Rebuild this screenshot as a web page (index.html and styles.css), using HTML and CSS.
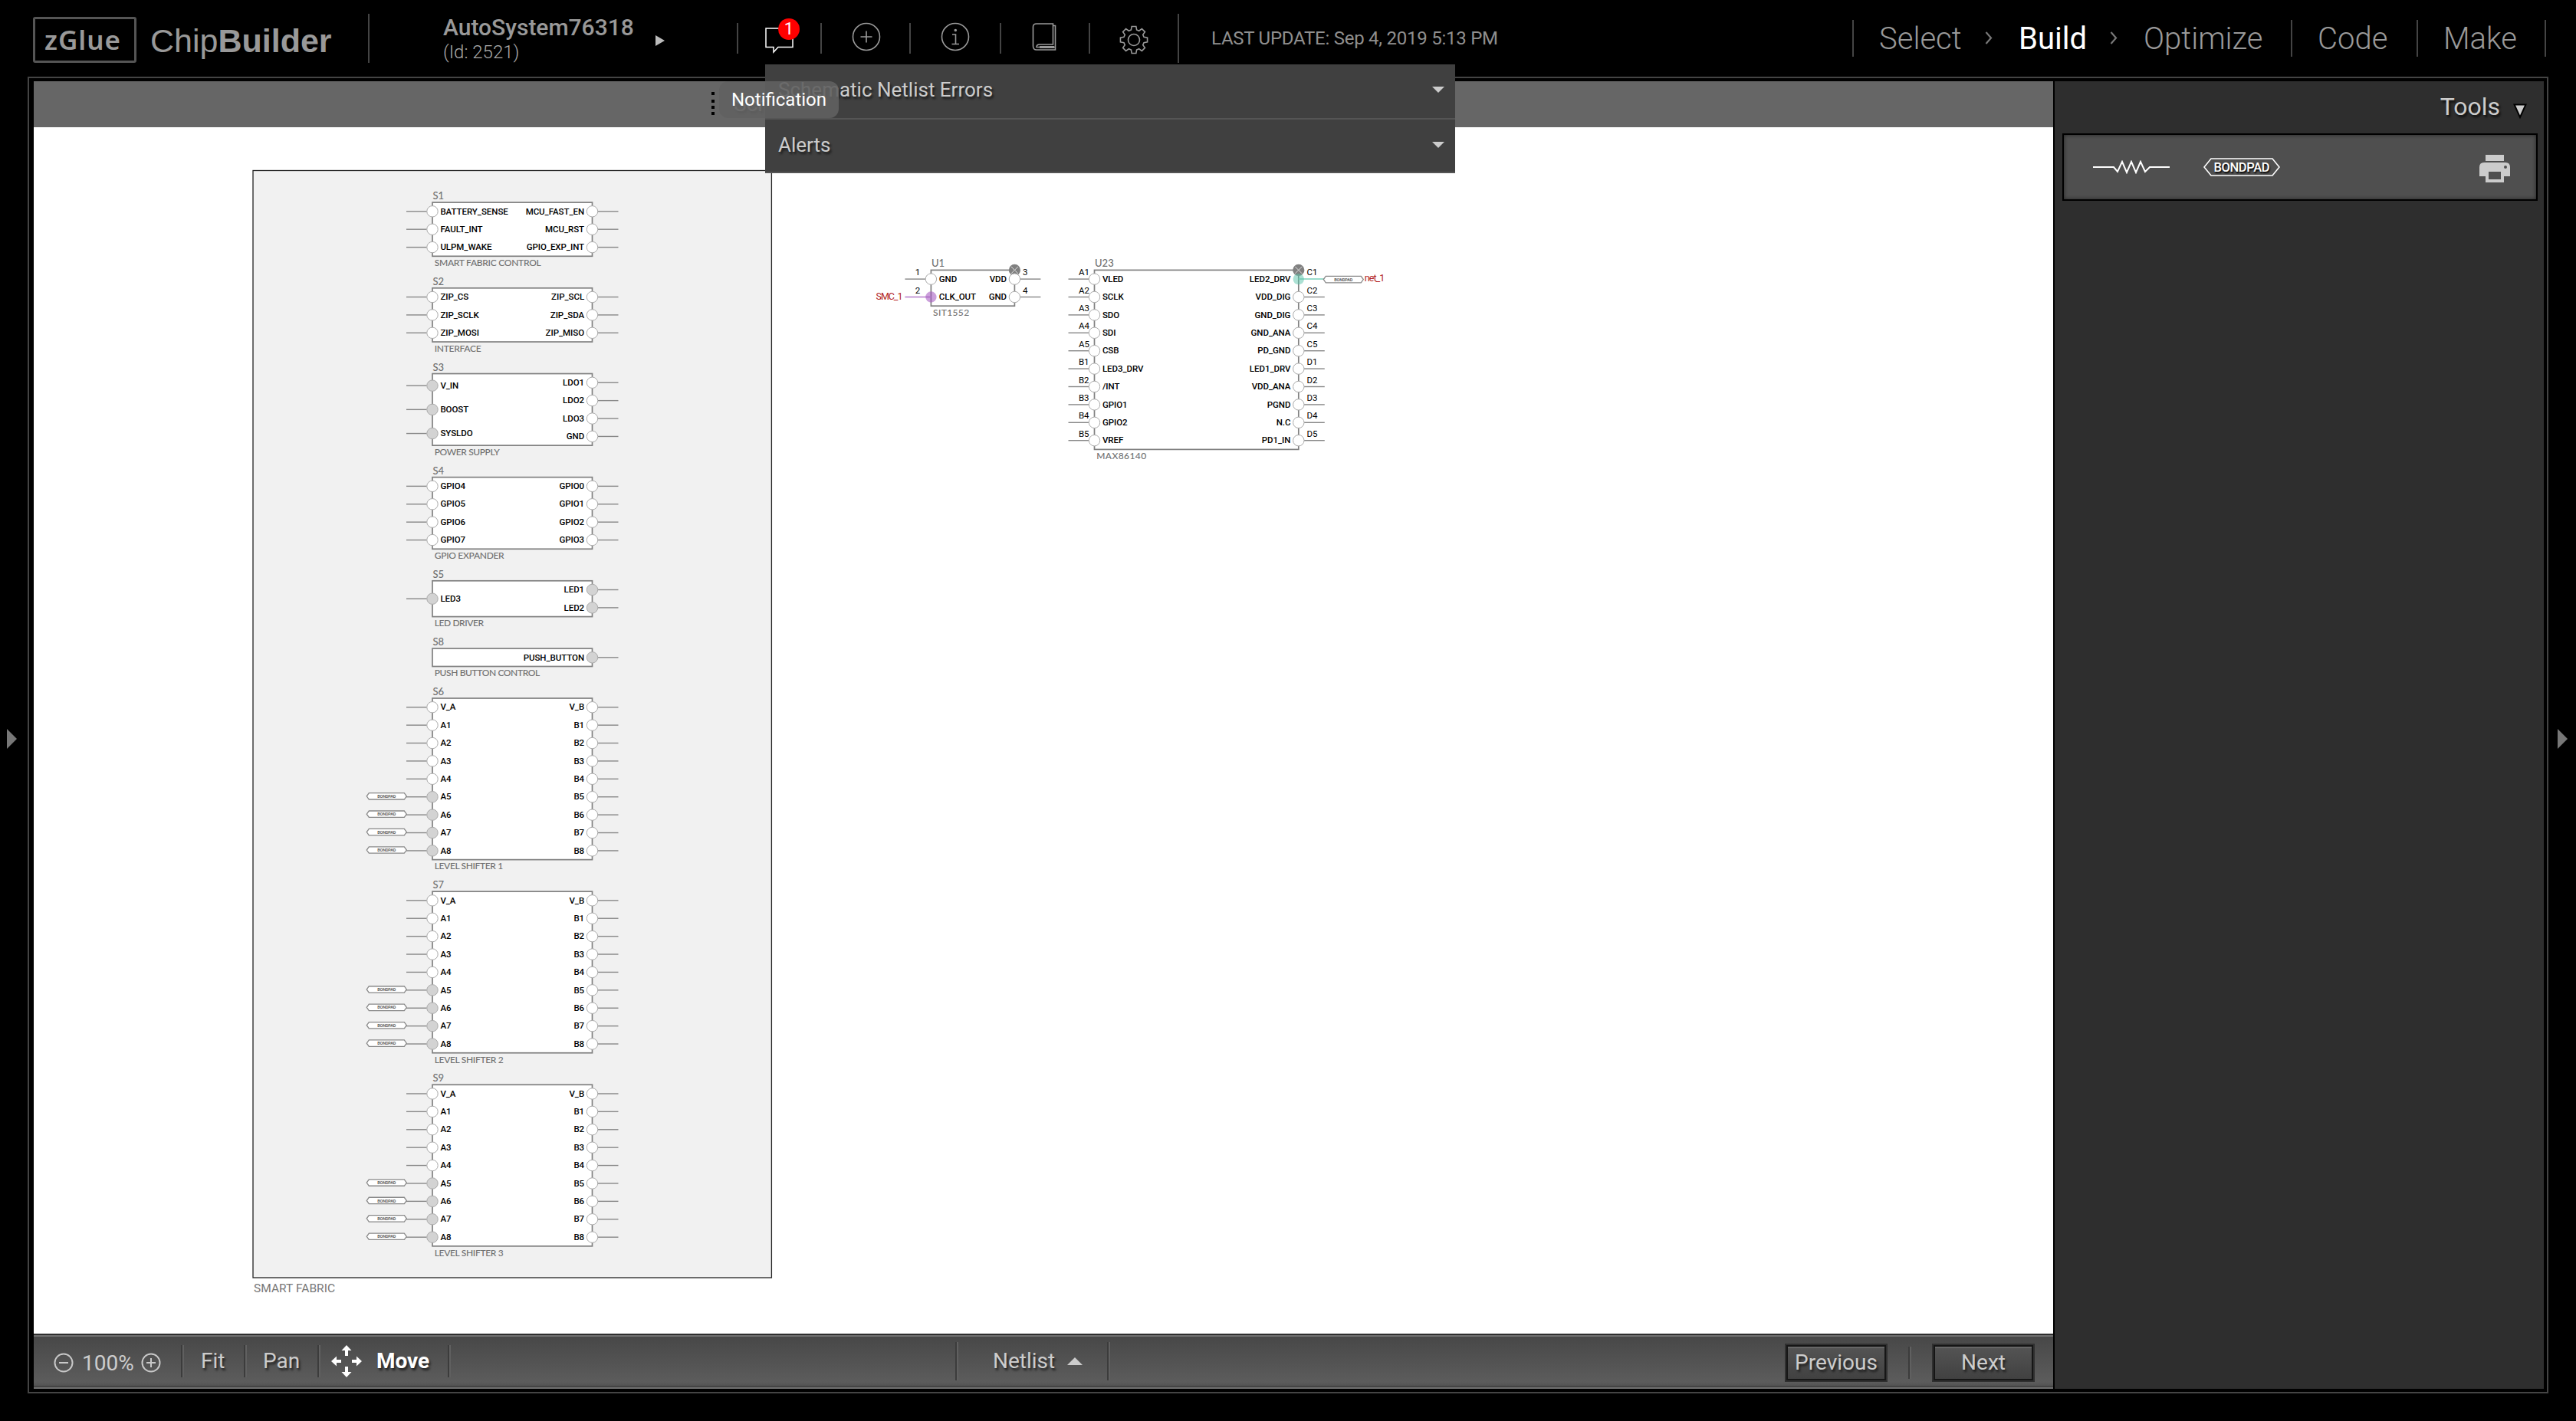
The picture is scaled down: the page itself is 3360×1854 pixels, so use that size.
FILE: index.html
```html
<!DOCTYPE html>
<html lang="en">
<head>
<meta charset="utf-8">
<title>zGlue ChipBuilder</title>
<link rel="stylesheet" href="styles.css">
</head>
<body>
<header class="header">
  <div class="brand">
    <div class="brand-box">zGlue</div>
    <div class="brand-name">Chip<b>Builder</b></div>
  </div>
  <div class="project">
    <div>
      <div class="project-name">AutoSystem76318</div>
      <div class="project-id">(Id: 2521)</div>
    </div>
    <svg class="project-arrow" width="12" height="14" viewBox="0 0 12 14"><path d="M0 0L12 7L0 14Z" fill="#bbb"/></svg>
  </div>
  <nav class="icons">
    <div class="icon-cell notif">
      <svg width="37" height="34" viewBox="0 0 37 34"><path d="M1 1H36V25.500H17L11 32V25.500H1Z" fill="none" stroke="#fff" stroke-width="1.500"/></svg>
      <span class="badge">1</span>
    </div>
    <div class="icon-cell add">
      <svg width="38" height="38" viewBox="0 0 38 38" fill="none" stroke="#999" stroke-width="1.600"><circle cx="19" cy="19" r="17.500"/><path d="M11.500 19H26.500M19 11.500V26.500"/></svg>
    </div>
    <div class="icon-cell info">
      <svg width="38" height="38" viewBox="0 0 38 38" fill="none" stroke="#999" stroke-width="1.600"><circle cx="19" cy="19" r="17.500"/><path d="M15 16H19.500V28M14.500 28.500H24"/><circle cx="19.300" cy="10.500" r="1" fill="#999"/></svg>
    </div>
    <div class="icon-cell book">
      <svg width="32" height="38" viewBox="0 0 32 38" fill="none" stroke="#999" stroke-width="1.600"><path d="M27 4.500H30.500V36H6Q1.500 36 1.500 31V6Q1.500 2 6 2H27.500V29H10Q6 29 6 32.500H30"/><path d="M10 32.500H29" stroke-width="3"/></svg>
    </div>
    <div class="icon-cell gear">
      <svg id="gear" width="38" height="38" viewBox="-19 -19 38 38" fill="none" stroke="#999" stroke-width="1.600"><circle r="7.500"/></svg>
    </div>
  </nav>
  <div class="update">LAST UPDATE: Sep 4, 2019 5:13 PM</div>
  <nav class="steps">
    <span class="step s-select">Select</span>
    <svg class="chev" width="10" height="17" viewBox="0 0 10 17"><path d="M1.500 1L8 8.500L1.500 16" fill="none" stroke="#777" stroke-width="2.200"/></svg>
    <span class="step s-build">Build</span>
    <svg class="chev" width="10" height="17" viewBox="0 0 10 17"><path d="M1.500 1L8 8.500L1.500 16" fill="none" stroke="#777" stroke-width="2.200"/></svg>
    <span class="step s-opt">Optimize</span>
    <span class="step s-code">Code</span>
    <span class="step s-make">Make</span>
  </nav>
</header>

<main class="frame">
  <section class="work">
    <div class="titlebar">
      <div class="grip"><i></i><i></i><i></i><i></i></div>
      <span class="title">Schematic</span>
    </div>
    <svg class="canvas" id="canvas" width="2634" height="1574" viewBox="44 166 2634 1574"></svg>
    <footer class="toolbar">
      <div class="zoom">
        <svg width="26" height="26" viewBox="0 0 26 26" fill="none" stroke="#c8c8c8" stroke-width="2"><circle cx="13" cy="13" r="11.500"/><path d="M7 13H19"/></svg>
        <span class="zoom-value">100%</span>
        <svg width="26" height="26" viewBox="0 0 26 26" fill="none" stroke="#c8c8c8" stroke-width="2"><circle cx="13" cy="13" r="11.500"/><path d="M7 13H19M13 7V19"/></svg>
      </div>
      <div class="cell fit">Fit</div>
      <div class="cell pan">Pan</div>
      <div class="cell move">
        <svg width="40" height="42" viewBox="0 0 40 42" fill="#fff"><path d="M20 0L26.500 7H22V14H18V7H13.500ZM20 42L26.500 35H22V28H18V35H13.500ZM0 21L7 14.500V19H13V23H7V27.500ZM40 21L33 14.500V19H27V23H33V27.500Z"/></svg>
        <span>Move</span>
      </div>
      <div class="cell netlist">Netlist
        <svg width="20" height="10" viewBox="0 0 20 10"><path d="M10 0L20 10H0Z" fill="#ccc"/></svg>
      </div>
      <button class="btn prev">Previous</button>
      <div class="rule"></div>
      <button class="btn">Next</button>
    </footer>
  </section>
  <aside class="side">
    <div class="side-head">Tools
      <svg width="18" height="20" viewBox="0 0 18 20"><path d="M1.500 1.500H16.500L9 18Z" fill="#ccc" stroke="#000" stroke-width="2"/></svg>
    </div>
    <div class="tools">
      <svg width="100" height="18" viewBox="0 0 100 18" fill="none" stroke="#fff" stroke-width="2"><path d="M0 9H27L32 15L38 2L44 16L50 2L56 16L62 2L68 15L74 9H100"/></svg>
      <div class="pad">
        <svg width="100" height="24" viewBox="0 0 100 24"><path d="M10 1H90L99 12L90 23H10L1 12Z" fill="none" stroke="#fff" stroke-width="1.600"/><text class="pad-text" x="50" y="18" text-anchor="middle" textLength="73">BONDPAD</text></svg>
      </div>
      <svg class="printer" width="40" height="36" viewBox="0 0 40 36"><path d="M8 0H32V8H8Z" fill="#ccc"/><path fill-rule="evenodd" fill="#ccc" d="M6 10H34Q40 10 40 16V28H32V36H8V28H0V16Q0 10 6 10ZM12 22V32H28V22ZM34 14A2 2 0 1 0 34 18A2 2 0 1 0 34 14Z"/></svg>
    </div>
  </aside>
</main>

<svg class="edge edge-left" width="13" height="26" viewBox="0 0 13 26"><path d="M0 0L13 13L0 26Z" fill="#777"/></svg>
<svg class="edge edge-right" width="13" height="26" viewBox="0 0 13 26"><path d="M0 0L13 13L0 26Z" fill="#777"/></svg>

<div class="dropdown">
  <div class="drop-row">Schematic Netlist Errors<svg width="16" height="8" viewBox="0 0 16 8"><path d="M0 0H16L8 8Z" fill="#ccc"/></svg></div>
  <div class="drop-row">Alerts<svg width="16" height="8" viewBox="0 0 16 8"><path d="M0 0H16L8 8Z" fill="#ccc"/></svg></div>
</div>
<div class="tooltip">Notification</div>
<script src="schematic.js"></script>
</body>
</html>
```
FILE: styles.css
```css
* { box-sizing: border-box; }
html, body { margin: 0; height: 100%; }
body {
  background: #000;
  color: #999;
  font-family: Roboto, "Liberation Sans", sans-serif;
  position: relative;
  overflow: hidden;
  width: 3360px;
  height: 1854px;
}
svg { display: block; flex: none; }

/* header */
.header { display: flex; height: 100px; padding: 18px 0 18px 43px; white-space: nowrap; }
.brand { width: 437px; display: flex; align-items: center; padding-top: 4px; }
.brand-box {
  width: 135px; height: 60px; border: 3px solid #555; border-radius: 3px;
  font: 600 35px/54px "Noto Sans", sans-serif; letter-spacing: 1px; padding-left: 12px;
}
.brand-name { font: 43px/60px "Liberation Sans", Arial, sans-serif; margin-left: 18px; padding-top: 2px; }
.project { width: 481px; border-left: 2px solid #444; padding: 3px 0 0 96px; display: flex; }
.project-name { font-weight: 500; font-size: 30px; line-height: 30px; }
.project-id { font-size: 24px; line-height: 30px; font-weight: 300; margin-top: 2px; color: #aaa; }
.project-arrow { margin: 25px 0 0 28px; }
.icons { display: flex; align-items: center; width: 575px; }
.icon-cell { height: 40px; border-left: 2px solid #444; position: relative; padding-top: 0; }
.notif { width: 109px; padding: 7px 0 0 35px; }
.add { width: 116px; padding-left: 39px; }
.info { width: 118px; padding-left: 39px; }
.book { width: 116px; padding-left: 40px; }
.gear { width: 116px; padding: 4px 0 0 38px; }
.icon-cell svg { margin-top: -1px; }
.badge {
  position: absolute; left: 52px; top: -6px; width: 28px; height: 28px; border-radius: 50%;
  background: #f00; color: #fff; font-size: 22px; line-height: 28px; text-align: center;
}
.update {
  width: 880px; border-left: 2px solid #444; padding-left: 42px;
  font-size: 24px; letter-spacing: -0.25px; line-height: 65px; color: #8f8f8f;
}
.steps { display: flex; align-items: center; }
.step { height: 48px; line-height: 50px; font-size: 40px; font-weight: 300; }
.s-select { width: 173px; border-left: 2px solid #444; padding-left: 33px; }
.chev { margin-top: -2px; }
.s-build { width: 153px; padding-left: 34px; color: #fff; font-weight: 400; }
.s-opt { width: 226px; padding-left: 34px; }
.s-code { width: 164px; border-left: 2px solid #444; padding-left: 33px; }
.s-make { width: 169px; border-left: 2px solid #444; border-right: 2px solid #444; padding-left: 33px; }

/* main frame */
.frame {
  margin-left: 36px; width: 3288px; height: 1718px; border: 2px solid #444;
  padding: 4px 4px 4px 6px; display: flex; gap: 2px;
}
.work { width: 2634px; display: flex; flex-direction: column; }
.titlebar { height: 60px; background: #666; display: flex; padding: 14px 0 0 884px; color: #ccc; }
.grip { width: 4px; display: flex; flex-direction: column; gap: 4px; }
.grip i { display: block; height: 4px; background: #000; }
.grip i:first-child { margin-bottom: 2px; }
.title { font-size: 28px; line-height: 32px; margin-left: 25px; text-shadow: 2px 3px 3px rgba(0,0,0,.6); }
.canvas { background: #fff; }
.side { flex: 1; background: #2e2e2e; }

/* bottom toolbar */
.toolbar {
  height: 72px; display: flex; align-items: center; white-space: nowrap;
  border-top: 2px solid #2e2e2e; border-bottom: 2px solid #707070;
  box-shadow: inset 0 2px #707070, inset 0 -2px #444;
  background: linear-gradient(#474747, #5c5c5c 90%, #505050);
  color: #ccc; font-size: 28px; text-shadow: 2px 3px 3px rgba(0,0,0,.6);
}
.zoom { display: flex; align-items: center; width: 192px; padding-left: 26px; text-shadow: none; }
.zoom svg { margin-top: 4px; }
.zoom-value { width: 88px; padding: 4px 0 0 11px; }
.cell {
  height: 42px; line-height: 42px; display: flex; align-items: center;
  border-left: 2px solid #3c3c3c; box-shadow: inset 2px 0 #606060;
}
.fit { width: 82px; padding-left: 24px; }
.pan { width: 96px; padding-left: 23px; }
.move {
  width: 172px; padding-left: 16px; gap: 19px; color: #fff; font-weight: 700;
  border-right: 2px solid #3c3c3c; box-shadow: inset 2px 0 #606060, 2px 0 #606060;
}
.netlist {
  height: 50px; width: 200px; margin-left: 660px; padding-left: 47px; gap: 16px;
  border-right: 2px solid #3c3c3c; box-shadow: inset 2px 0 #606060, 2px 0 #606060;
}
.btn {
  width: 134px; height: 50px; margin: 4px 0 0; padding: 0; border: 2px solid #303030;
  box-shadow: inset 0 0 0 2px #161616, inset 2px 4px #666;
  background: linear-gradient(#555, #404040);
  color: #ccc; font: 28px/44px Roboto, sans-serif; text-shadow: inherit;
}
.prev { margin-left: 882px; }
.rule { width: 4px; height: 42px; margin: 4px 27px 0; border-left: 2px solid #3c3c3c; border-right: 2px solid #606060; }

/* tools panel */
.side-head {
  height: 68px; display: flex; justify-content: flex-end; padding: 15px 22px 0 0; gap: 17px;
  color: #ccc; font-size: 32px; line-height: 36px; text-shadow: 2px 3px 3px rgba(0,0,0,.7);
}
.side-head svg { margin-top: 14px; }
.tools {
  height: 88px; margin: 0 8px 0 10px; border: 2px solid #000; background: #4f4f4f;
  box-shadow: inset 0 0 5px #222; display: flex; align-items: center; padding: 0 34px 0 38px;
}
.pad { margin-left: 44px; }
.pad-text { font-size: 16.500px; font-weight: 500; fill: #fff; text-shadow: 1px 2px 2px #000; }
.printer { margin: 4px 0 0 auto; }

/* overlays */
.edge { position: absolute; top: 951px; }
.edge-left { left: 9px; }
.edge-right { left: 3336px; }
.dropdown { position: absolute; left: 998px; top: 84px; width: 900px; background: #404040; }
.drop-row {
  display: flex; justify-content: space-between; align-items: center;
  height: 72px; border-bottom: 2px solid #555; padding: 0 14px 4px 17px;
  font-size: 26px; color: #ccc; text-shadow: 2px 3px 3px rgba(0,0,0,.6);
}
.drop-row:last-child { height: 70px; padding-bottom: 2px; }
.tooltip {
  position: absolute; left: 938px; top: 106px; width: 156px; height: 48px; border-radius: 12px;
  background: rgba(97,97,97,.9); color: #fff; font-size: 24px; line-height: 48px; text-align: center;
}

/* schematic */
.fabric { fill: #f1f1f1; stroke: #222; stroke-width: 1.300; }
.fabric-label { font-size: 15.500px; fill: #777; }
.body { fill: #fff; stroke: #808080; stroke-width: 1.700; }
.stub { stroke: #888; stroke-width: 1.400; }
.dot { fill: #fff; stroke: #aaa; stroke-width: 1; }
.dot-used { fill: #d3d3d3; }
.dot-purple { fill: rgba(160,80,190,.55); stroke: none; }
.dot-teal { fill: rgba(90,195,170,.5); stroke: none; }
.stub-purple { stroke: #c79ad8; stroke-width: 2; }
.stub-teal { stroke: #9adccb; stroke-width: 2; }
.pin { font-size: 11.500px; font-weight: 500; letter-spacing: -0.05px; fill: #000; }
.num { font-size: 11.500px; fill: #000; }
.net { font-size: 12.500px; fill: #b22222; }
.ref, .cap { font-family: Lato, sans-serif; font-size: 12px; font-weight: 500; fill: #707070; }
.ref { font-size: 13px; }
.tag { fill: #fff; stroke: #888; stroke-width: 1.300; }
.tag-text { font-size: 5.500px; font-weight: 700; fill: #666; }
.del { fill: #808080; }
.cross { stroke: #ddd; stroke-width: 1; }
```
FILE: schematic.js
```js
const NS = 'http://www.w3.org/2000/svg';
const canvas = document.getElementById('canvas');
const PITCH = 23.4;

function add(tag, attrs, text) {
  const el = document.createElementNS(NS, tag);
  for (const k in attrs) el.setAttribute(k, attrs[k]);
  if (text !== undefined) el.textContent = text;
  canvas.appendChild(el);
}

function bondpad(x, y) {
  add('path', { class: 'tag', d: `M${x + 3} ${y - 4.2}H${x + 49}L${x + 52} ${y}L${x + 49} ${y + 4.2}H${x + 3}L${x} ${y}Z` });
  add('text', { class: 'tag-text', x: x + 26, y: y + 2.1, 'text-anchor': 'middle', textLength: 24 }, 'BONDPAD');
}

/* used: names of the pins that carry a connection; colored: pin name -> colour class */
function chip(c) {
  const { x, y, w } = c;
  const rows = Math.max(c.left.length, c.right.length);
  const h = rows * PITCH;
  add('text', { class: 'ref', x: x + 0.5, y: y - 4 }, c.ref);
  add('rect', { class: 'body', x, y, width: w, height: h });
  add('text', { class: 'cap', x: x + 2.7, y: y + h + 12.8, textLength: c.capW }, c.cap);
  if (c.del) {
    add('circle', { class: 'del', cx: x + w, cy: y, r: 7.6 });
    add('path', { class: 'cross', d: `M${x + w - 4.5} ${y - 4.5}l9 9m0 -9l-9 9` });
  }
  [['left', x, -1], ['right', x + w, 1]].forEach(([side, px, dir]) => {
    const list = c[side];
    list.forEach((pin, i) => {
      const [name, num] = pin.split('|');
      const py = y + h * (i + 0.5) / list.length;
      const color = (c.colored || {})[name];
      add('path', { class: color ? 'stub-' + color : 'stub', d: `M${color ? px : px + dir * 7.3} ${py}H${px + dir * 34}` });
      let cls = 'dot';
      if (c.used && c.used.includes(name)) cls += ' dot-used';
      if (color) cls += ' dot-' + color;
      add('circle', { class: cls, cx: px, cy: py, r: 7.2 });
      add('text', { class: 'pin', x: px - dir * 10.4, y: py + 3.7, 'text-anchor': dir < 0 ? 'start' : 'end' }, name);
      if (num) add('text', { class: 'num', x: dir < 0 ? px - 20.6 : px + 10.6, y: py - 5 }, num);
      if (dir < 0 && c.pads && i > 4) bondpad(px - 85.7, py - 0.9);
    });
  });
}

add('rect', { class: 'fabric', x: 330, y: 222.5, width: 676.4, height: 1444.5 });
add('text', { class: 'fabric-label', x: 331, y: 1685.7, textLength: 106 }, 'SMART FABRIC');

const A = ['V_A', 'A1', 'A2', 'A3', 'A4', 'A5', 'A6', 'A7', 'A8'];
const B = ['V_B', 'B1', 'B2', 'B3', 'B4', 'B5', 'B6', 'B7', 'B8'];
const USED = ['A5', 'A6', 'A7', 'A8'];
const blocks = [
  { ref: 'S1', cap: 'SMART FABRIC CONTROL', capW: 139, left: ['BATTERY_SENSE', 'FAULT_INT', 'ULPM_WAKE'], right: ['MCU_FAST_EN', 'MCU_RST', 'GPIO_EXP_INT'] },
  { ref: 'S2', cap: 'INTERFACE', capW: 61, left: ['ZIP_CS', 'ZIP_SCLK', 'ZIP_MOSI'], right: ['ZIP_SCL', 'ZIP_SDA', 'ZIP_MISO'] },
  { ref: 'S3', cap: 'POWER SUPPLY', capW: 85, left: ['V_IN', 'BOOST', 'SYSLDO'], right: ['LDO1', 'LDO2', 'LDO3', 'GND'], used: ['V_IN', 'BOOST', 'SYSLDO'] },
  { ref: 'S4', cap: 'GPIO EXPANDER', capW: 91, left: ['GPIO4', 'GPIO5', 'GPIO6', 'GPIO7'], right: ['GPIO0', 'GPIO1', 'GPIO2', 'GPIO3'] },
  { ref: 'S5', cap: 'LED DRIVER', capW: 64.5, left: ['LED3'], right: ['LED1', 'LED2'], used: ['LED1', 'LED2', 'LED3'] },
  { ref: 'S8', cap: 'PUSH BUTTON CONTROL', capW: 137.5, left: [], right: ['PUSH_BUTTON'], used: ['PUSH_BUTTON'] },
  { ref: 'S6', cap: 'LEVEL SHIFTER 1', capW: 89.5, left: A, right: B, used: USED, pads: true },
  { ref: 'S7', cap: 'LEVEL SHIFTER 2', capW: 90, left: A, right: B, used: USED, pads: true },
  { ref: 'S9', cap: 'LEVEL SHIFTER 3', capW: 90, left: A, right: B, used: USED, pads: true }
];
blocks.reduce((y, b) => {
  chip(Object.assign(b, { x: 564, y, w: 208.5 }));
  return y + Math.max(b.left.length, b.right.length) * PITCH + 41.52;
}, 264.1);

chip({ ref: 'U1', cap: 'SIT1552', capW: 47, x: 1214.4, y: 352.4, w: 109, del: true,
  left: ['GND|1', 'CLK_OUT|2'], right: ['VDD|3', 'GND|4'], colored: { CLK_OUT: 'purple' } });
chip({ ref: 'U23', cap: 'MAX86140', capW: 65, x: 1427.5, y: 352.4, w: 266.3, del: true,
  left: ['VLED|A1', 'SCLK|A2', 'SDO|A3', 'SDI|A4', 'CSB|A5', 'LED3_DRV|B1', '/INT|B2', 'GPIO1|B3', 'GPIO2|B4', 'VREF|B5'],
  right: ['LED2_DRV|C1', 'VDD_DIG|C2', 'GND_DIG|C3', 'GND_ANA|C4', 'PD_GND|C5', 'LED1_DRV|D1', 'VDD_ANA|D2', 'PGND|D3', 'N.C|D4', 'PD1_IN|D5'],
  colored: { LED2_DRV: 'teal' } });
bondpad(1726.3, 364.6);
add('text', { class: 'net', x: 1142.5, y: 391.2, textLength: 35 }, 'SMC_1');
add('text', { class: 'net', x: 1779.8, y: 366.8, textLength: 26.5 }, 'net_1');

/* eight-tooth settings gear */
let d = '';
for (let i = 0; i < 8; i++) {
  [[-0.27, 13.5], [-0.16, 17.8], [0.16, 17.8], [0.27, 13.5]].forEach(([a, r], j) => {
    const t = i * Math.PI / 4 + a;
    d += (i + j ? 'L' : 'M') + (r * Math.sin(t)).toFixed(2) + ' ' + (-r * Math.cos(t)).toFixed(2);
  });
}
const gear = document.createElementNS(NS, 'path');
gear.setAttribute('d', d + 'Z');
document.getElementById('gear').appendChild(gear);
```
